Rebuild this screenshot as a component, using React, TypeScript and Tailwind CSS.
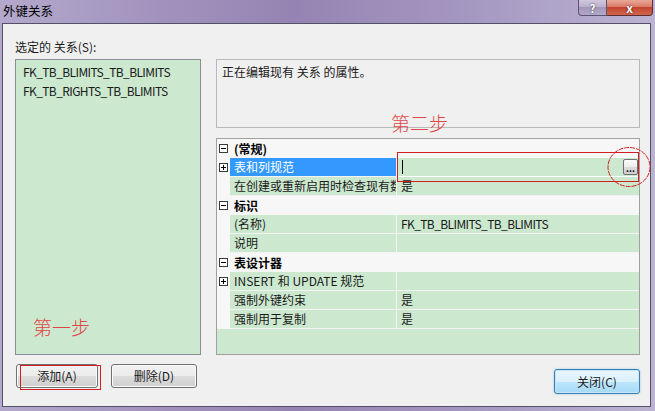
import React from "react";

const F = "font-['Noto_Sans_CJK_SC','Noto_Sans',sans-serif]";

function BoxIcon({ plus }: { plus?: boolean }) {
  return (
    <svg width="9" height="9" viewBox="0 0 9 9" className="block">
      <rect x="0.5" y="0.5" width="8" height="8" fill="#ffffff" stroke="#3a3a3a" />
      <line x1="2" y1="4.5" x2="7" y2="4.5" stroke="#000" />
      {plus && <line x1="4.5" y1="2" x2="4.5" y2="7" stroke="#000" />}
    </svg>
  );
}

function Category({ label }: { label: string }) {
  return (
    <div className="flex h-[19px] bg-[#f7f7f7] items-center">
      <div className="w-[13px] flex justify-center">
        <BoxIcon />
      </div>
      <div className="pl-[4px] font-bold text-[12px] leading-[19px] text-black">{label}</div>
    </div>
  );
}

function Prop({ name, value, plus, tight }: { name: string; value?: string; plus?: boolean; tight?: boolean }) {
  return (
    <div className="flex h-[19px]">
      <div className="w-[13px] bg-[#f7f7f7] flex items-center justify-center">
        {plus && <BoxIcon plus />}
      </div>
      <div className="w-[167px] bg-[#cce8cf] border-r border-b border-[#f4f4f4] pl-[4px] text-[12px] leading-[18px] text-[#1a1a1a] overflow-hidden whitespace-nowrap">
        {name}
      </div>
      <div
        className={`flex-1 bg-[#cce8cf] border-b border-[#f4f4f4] pl-[4px] text-[12px] leading-[18px] text-[#1a1a1a] whitespace-nowrap overflow-hidden ${tight ? "tracking-[-0.6px]" : ""}`}
      >
        {value}
      </div>
    </div>
  );
}

export default function App() {
  return (
    <div
      className={`${F} relative w-[655px] h-[411px] overflow-hidden flex flex-col pl-[2px] pr-[4px] pb-[4px] bg-[linear-gradient(90deg,#b4a9cc_0%,#a092bd_25%,#9584b3_45%,#a396c0_70%,#bcb3d2_100%)]`}
    >
      {/* Title bar */}
      <div className="h-[23px] flex items-start justify-between">
        <div className="pl-[1px] pt-[3px] text-[12.5px] leading-[16px] text-black">外键关系</div>
        <div className="flex -mr-[2px]">
          <div className="w-[29px] h-[16px] rounded-bl-[4px] border border-t-0 border-[#5a5470] bg-[linear-gradient(#d0c8de_0%,#b8aecb_50%,#a398bb_50%,#b2a8c8_100%)] flex items-center justify-center text-[11px] leading-[14px] font-bold text-white [text-shadow:0_0_2px_#333]">
            ?
          </div>
          <div className="w-[46px] h-[16px] rounded-br-[4px] border border-t-0 border-l-0 border-[#5a3030] bg-[linear-gradient(#e9a898_0%,#d87664_50%,#c4452f_50%,#d3664e_100%)] flex items-center justify-center text-[12px] leading-[14px] font-bold text-white [text-shadow:0_0_2px_#400]">
            x
          </div>
        </div>
      </div>

      {/* Client area */}
      <div className="flex-1 flex flex-col bg-[#f0f0f0] border border-[#55506a]">
        <div className="h-[35px] pl-[12px] pt-[15px] text-[12px] leading-[16px] text-[#1a1a1a]">选定的 关系(S):</div>

        <div className="flex h-[296px] pl-[12px] gap-[15px]">
          <div className="w-[186px] h-full border border-[#8a8f96] bg-[#cce8cf] pt-[2px] pl-[7px] text-[12px] leading-[19px] text-[#1a1a1a] tracking-[-0.6px]">
            <div>FK_TB_BLIMITS_TB_BLIMITS</div>
            <div>FK_TB_RIGHTS_TB_BLIMITS</div>
          </div>

          <div className="w-[424px] h-full flex flex-col">
            <div className="h-[69px] border border-[#b9b9b9] bg-[#f0f0f0] pl-[5px] pt-[3px] text-[12px] leading-[18px] text-[#1a1a1a]">
              正在编辑现有 关系 的属性。
            </div>
            <div className="mt-[10px] flex-1 flex flex-col border border-[#a0a0a0] bg-[#cce8cf]">
              <Category label="(常规)" />
              <div className="flex h-[19px]">
                <div className="w-[13px] bg-[#f7f7f7] flex items-center justify-center">
                  <BoxIcon plus />
                </div>
                <div className="w-[167px] bg-[#3399ff] border-r border-b border-[#f4f4f4] pl-[4px] text-[12px] leading-[18px] text-white whitespace-nowrap">
                  表和列规范
                </div>
                <div className="flex-1 bg-[#cce8cf] border-b border-[#ffffff] flex items-center justify-between">
                  <div className="ml-[5px] w-px h-[14px] bg-black" />
                  <div className="mr-[1px] w-[15px] h-[16px] rounded-[2px] border border-[#707070] bg-[linear-gradient(#fbfbfb_0%,#ececec_50%,#dcdcdc_50%,#d0d0d0_100%)] flex items-end justify-center text-[9px] leading-[11px] font-bold text-black">
                    ...
                  </div>
                </div>
              </div>
              <Prop name="在创建或重新启用时检查现有数据" value="是" />
              <Category label="标识" />
              <Prop name="(名称)" value="FK_TB_BLIMITS_TB_BLIMITS" tight />
              <Prop name="说明" value="" />
              <Category label="表设计器" />
              <Prop name="INSERT 和 UPDATE 规范" value="" plus />
              <Prop name="强制外键约束" value="是" />
              <Prop name="强制用于复制" value="是" />
              <div className="flex-1 bg-[#cce8cf]" />
            </div>
          </div>
        </div>

        <div className="flex items-start pl-[13px] pt-[9px] pr-[10px]">
          <button className="w-[82px] h-[24px] rounded-[3px] border border-[#707070] bg-[linear-gradient(#f2f2f2_0%,#ebebeb_50%,#dddddd_50%,#cfcfcf_100%)] shadow-[inset_0_0_0_1px_#fbfbfb] text-[12px] leading-[20px] text-[#1a1a1a]">
            添加(A)
          </button>
          <button className="ml-[13px] w-[86px] h-[24px] rounded-[3px] border border-[#707070] bg-[linear-gradient(#f2f2f2_0%,#ebebeb_50%,#dddddd_50%,#cfcfcf_100%)] shadow-[inset_0_0_0_1px_#fbfbfb] text-[12px] leading-[20px] text-[#1a1a1a]">
            删除(D)
          </button>
          <button className="ml-auto mt-[5px] w-[86px] h-[25px] rounded-[3px] border border-[#3c7fb1] bg-[linear-gradient(#eaf6fd_0%,#d9f0fc_50%,#bee6fd_50%,#a7d9f5_100%)] shadow-[inset_0_0_0_1px_#c6e6f8,0_0_2px_#7ec3ea] text-[12px] leading-[21px] text-[#1a1a1a]">
            关闭(C)
          </button>
        </div>
      </div>

      {/* Annotations (overlays) */}
      <div className="absolute left-[391px] top-[112px] text-[19px] leading-[22px] font-light text-[#e24545]">第二步</div>
      <div className="absolute left-[33px] top-[316px] text-[19px] leading-[22px] font-light text-[#e24545]">第一步</div>
      <div className="absolute left-[397px] top-[152px] w-[242px] h-[30px] border border-[#d21e1e]" />
      <div className="absolute left-[20px] top-[365px] w-[81px] h-[25px] border border-[#d21e1e]" />
      <svg className="absolute left-[605px] top-[144px]" width="48" height="46" viewBox="0 0 48 46">
        <ellipse cx="24" cy="23" rx="21" ry="19.5" fill="none" stroke="#d21e1e" strokeWidth="1" strokeDasharray="5 1" />
      </svg>
    </div>
  );
}
